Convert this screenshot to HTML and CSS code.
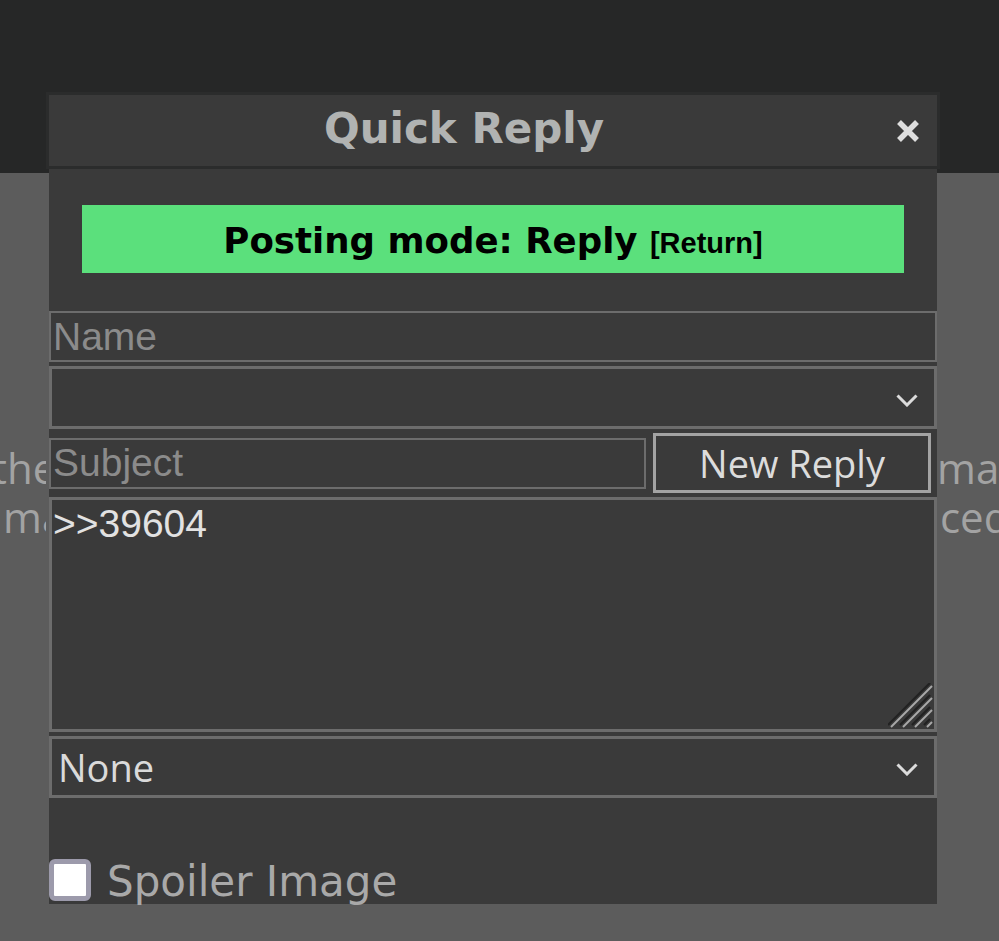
FILE: index.html
```
<!DOCTYPE html>
<html>
<head>
    <title>Quick Reply</title>
    <link rel="stylesheet" href="styles.css">
</head>
<body>
    <div class="topbar"></div>
    <div class="page-text">
        <div class="frag-left">
            <div>there</div>
            <div class="indent">make</div>
        </div>
        <div class="frag-right">
            <div>mark</div>
            <div class="indent-small">ced</div>
        </div>
    </div>

    <div class="qr-dialog">
        <div class="qr-header">
            <span class="qr-title">Quick Reply</span>
            <button class="qr-close" type="button" title="Close">
                <svg width="22" height="22" viewBox="0 0 22 22">
                    <path d="M2 2 L20 20 M20 2 L2 20" stroke="#dedede" stroke-width="5.5" fill="none"/>
                </svg>
            </button>
        </div>
        <div class="qr-body">
            <div class="mode-banner">Posting mode: Reply <span class="mode-return">[Return]</span></div>

            <input class="field name-field" type="text" placeholder="Name">
            <div class="select-wrap flag-select">
                <select class="field-select">
                    <option></option>
                </select>
                <svg class="chevron" width="22" height="13" viewBox="0 0 22 13">
                    <polyline points="1.5,1.5 11,11 20.5,1.5" stroke="#dcdcdc" stroke-width="3" fill="none"/>
                </svg>
            </div>
            <div class="subject-row">
                <input class="field subject-field" type="text" placeholder="Subject">
                <button class="submit-button" type="submit">New Reply</button>
            </div>
            <div class="comment-wrap">
                <textarea class="comment-area">&gt;&gt;39604</textarea>
                <!-- resize grip -->
                <svg class="grip" width="45" height="45" viewBox="0 0 45 45">
                    <g stroke="#222" stroke-width="2.2">
                        <line x1="0" y1="42" x2="42" y2="0"/>
                        <line x1="12" y1="42" x2="42" y2="12"/>
                        <line x1="24" y1="42" x2="42" y2="24"/>
                        <line x1="36" y1="42" x2="42" y2="36"/>
                    </g>
                    <g stroke="#a8a8a8" stroke-width="2">
                        <line x1="3" y1="44" x2="44" y2="3"/>
                        <line x1="15" y1="44" x2="44" y2="15"/>
                        <line x1="27" y1="44" x2="44" y2="27"/>
                        <line x1="39" y1="44" x2="44" y2="39"/>
                    </g>
                </svg>
            </div>
            <div class="select-wrap file-select">
                <select class="field-select">
                    <option>None</option>
                </select>
                <svg class="chevron" width="22" height="13" viewBox="0 0 22 13">
                    <polyline points="1.5,1.5 11,11 20.5,1.5" stroke="#dcdcdc" stroke-width="3" fill="none"/>
                </svg>
            </div>
            <label class="spoiler-row">
                <input class="spoiler-box" type="checkbox">
                <span>Spoiler Image</span>
            </label>
        </div>
    </div>
</body>
</html>
```

FILE: styles.css
```
body {
    margin: 0;
    background: #5c5c5c;
    overflow: hidden;
}

.topbar {
    height: 173px;
    background: #262727;
}

.page-text {
    display: flex;
    justify-content: space-between;
    margin-top: 270px;
    font-family: 'Open Sans', sans-serif;
    font-size: 42px;
    line-height: 49px;
    color: #a3a3a3;
    white-space: nowrap;
}

.frag-left {
    width: 54px;
    margin-left: -8px;
    overflow: hidden;
}

.frag-left .indent {
    padding-left: 11px;
}

.frag-right {
    width: 62px;
    overflow: hidden;
}

.frag-right .indent-small {
    padding-left: 3px;
}

.qr-dialog {
    position: absolute;
    left: 46px;
    top: 92px;
    width: 894px;
}

.qr-header {
    display: flex;
    align-items: center;
    height: 71px;
    background: #3a3a3a;
    border: 3px solid #2b2c2c;
}

.qr-title {
    flex: 1;
    text-align: center;
    font-family: 'DejaVu Sans', sans-serif;
    font-weight: bold;
    font-size: 42px;
    line-height: 67px;
    padding-bottom: 4px;
    color: #b1b3b2;
}

.qr-close {
    width: 58px;
    height: 71px;
    padding: 0;
    border: none;
    background: none;
    display: flex;
    align-items: center;
    justify-content: center;
}

.qr-body {
    display: flex;
    flex-direction: column;
    margin: 0 3px;
    padding-top: 36px;
    height: 735px;
    box-sizing: border-box;
    background: #3a3a3a;
}

.mode-banner {
    margin: 0 33px;
    height: 68px;
    box-sizing: border-box;
    padding-top: 3px;
    line-height: 65px;
    background: #5be07c;
    color: #000;
    text-align: center;
    font-family: 'DejaVu Sans', sans-serif;
    font-weight: bold;
    font-size: 35.6px;
    white-space: nowrap;
}

.mode-return {
    font-family: 'Liberation Sans', sans-serif;
    font-size: 29px;
}

.field {
    box-sizing: border-box;
    height: 51px;
    margin: 0;
    padding: 1px 2px;
    background: #3a3a3a;
    border: 2px solid #6c6c6c;
    color: #e2e2e2;
    font-family: 'Liberation Sans', sans-serif;
    font-size: 39px;
    outline: none;
}

.field::placeholder {
    color: #8b8b8b;
}

.name-field {
    margin-top: 38px;
}

.select-wrap {
    position: relative;
    margin-top: 4px;
}

.flag-select .field-select {
    height: 63px;
}

.file-select .field-select {
    height: 62px;
}

.field-select {
    display: block;
    width: 100%;
    box-sizing: border-box;
    margin: 0;
    padding: 0 6px;
    appearance: none;
    background: #3a3a3a;
    border: 3px solid #6c6c6c;
    color: #dadada;
    font-family: 'Open Sans', sans-serif;
    font-size: 38px;
    outline: none;
}

.chevron {
    position: absolute;
    right: 19px;
    top: calc(50% - 4px);
}

.subject-row {
    display: flex;
    align-items: center;
    gap: 7px;
    margin-top: 4px;
    height: 60px;
    padding-right: 6px;
}

.subject-field {
    flex: 1;
    min-width: 0;
}

.submit-button {
    width: 278px;
    height: 60px;
    padding: 0;
    background: #3a3a3a;
    border: 3px solid #a3a3a3;
    color: #dcdcdc;
    font-family: 'Open Sans', sans-serif;
    font-size: 38px;
}

.comment-wrap {
    position: relative;
    margin-top: 4px;
    height: 235px;
}

.comment-area {
    display: block;
    box-sizing: border-box;
    width: 100%;
    height: 100%;
    margin: 0;
    padding: 2px 1px;
    resize: none;
    background: #3a3a3a;
    border: 3px solid #6c6c6c;
    color: #e2e2e2;
    font-family: 'Liberation Sans', sans-serif;
    font-size: 39px;
    outline: none;
}

.grip {
    position: absolute;
    right: 4px;
    bottom: 4px;
}

.spoiler-row {
    display: flex;
    align-items: flex-start;
    gap: 16px;
    margin-top: 61px;
    height: 45px;
    font-family: 'DejaVu Sans', sans-serif;
    font-size: 42px;
    line-height: 45px;
    color: #a9a9a9;
}

.spoiler-box {
    appearance: none;
    width: 42px;
    height: 42px;
    margin: 0;
    box-sizing: border-box;
    background: #fff;
    border: 5px solid #9c9aab;
    border-radius: 6px;
}
```
